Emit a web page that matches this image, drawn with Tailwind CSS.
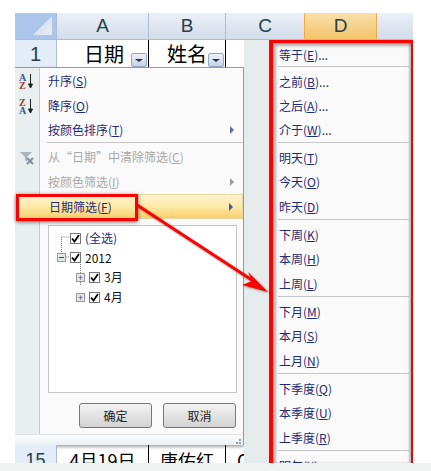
<!doctype html>
<html lang="zh">
  <head>
    <meta charset="UTF-8" />
    <title>日期筛选</title>
    <script src="https://cdn.jsdelivr.net/npm/@tailwindcss/browser@4"></script>
  </head>
  <body class="bg-white">
    <div class="relative w-[431px] h-[471px] overflow-hidden flex flex-col font-['Noto_Sans_CJK_SC',sans-serif]">
      <div class="h-[13px] shrink-0"></div>

      <!-- sheet -->
      <div class="ml-[15px] w-[398px] h-[450px] shrink-0 overflow-hidden flex flex-col">
        <!-- column headers -->
        <div class="flex h-[27px] shrink-0 text-[19px] text-[#24404f] font-['Liberation_Sans',sans-serif] border-b border-[#a9bdd6]">
          <div class="relative w-[42px] bg-[#abc6ea] border-r border-[#a9bdd6]">
            <div class="absolute right-[4px] bottom-[4px] w-[19px] h-[19px] bg-gradient-to-br from-[#c9d8ec] to-[#e8eef6] [clip-path:polygon(100%_0,100%_100%,0_100%)]"></div>
          </div>
          <div class="w-[92px] flex items-center justify-center bg-gradient-to-b from-[#eceff6] to-[#d3dcea] border-r border-[#a9bdd6]">A</div>
          <div class="w-[77px] flex items-center justify-center bg-gradient-to-b from-[#eceff6] to-[#d3dcea] border-r border-[#a9bdd6]">B</div>
          <div class="w-[78px] flex items-center justify-center bg-gradient-to-b from-[#eceff6] to-[#d3dcea]">C</div>
          <div class="w-[73px] flex items-center justify-center bg-gradient-to-b from-[#f9dfa8] to-[#f1c56a] border-x border-[#f0ab45]">D</div>
          <div class="flex-1 bg-gradient-to-b from-[#eceff6] to-[#d3dcea]"></div>
        </div>

        <div class="flex flex-1 min-h-0">
          <!-- left column: row 1, filter menu, row 15 -->
          <div class="w-[229px] shrink-0 flex flex-col">
            <div class="flex h-[27px] shrink-0">
              <div class="w-[42px] bg-[#e4ecf7] border-r border-[#a9bdd6] flex items-center justify-center text-[20px] text-[#24404f] font-['Liberation_Sans',sans-serif]">1</div>
              <div class="w-[92px] border-r border-black flex items-center justify-end text-[20px] text-black">
                <span class="mr-[7px]">日期</span>
                <span class="self-end mr-px w-[16px] h-[14px] rounded-[2px] border border-[#98a8c4] bg-gradient-to-b from-[#eef1f8] to-[#c9d3e6] flex items-center justify-center">
                  <span class="w-0 h-0 border-x-[4px] border-x-transparent border-t-[3px] border-t-[#1f2f5f]"></span>
                </span>
              </div>
              <div class="w-[77px] border-r border-black flex items-center justify-end text-[20px] text-black">
                <span class="mr-[1px]">姓名</span>
                <span class="self-end mr-px w-[16px] h-[14px] rounded-[2px] border border-[#98a8c4] bg-gradient-to-b from-[#eef1f8] to-[#c9d3e6] flex items-center justify-center">
                  <span class="w-0 h-0 border-x-[4px] border-x-transparent border-t-[3px] border-t-[#1f2f5f]"></span>
                </span>
              </div>
              <div class="flex-1"></div>
            </div>

            <!-- filter menu -->
            <div class="h-[378px] shrink-0 flex flex-col bg-[#fafafa] border-t border-r border-[#9a9a9a] shadow-[0_2px_3px_rgba(0,0,0,0.35)]">
              <div class="flex h-[366px]">
                <div class="w-[25px] shrink-0 bg-[#e9eeee] border-r border-[#c9c9c9] flex flex-col pt-px">
                  <div class="h-[25px] flex items-center pl-[4px] gap-[2px]">
                    <span class="flex flex-col text-[10px] leading-[8px] font-bold font-['Liberation_Serif',serif]"><span class="text-[#2f5a9e]">A</span><span class="text-[#9c3a35]">Z</span></span>
                    <svg class="w-[5px] h-[15px]" viewBox="0 0 5 15"><path d="M2.5 0v13M.5 10l2 4 2-4z" stroke="#222" fill="#222" stroke-width="1" /></svg>
                  </div>
                  <div class="h-[25px] flex items-center pl-[4px] gap-[2px]">
                    <span class="flex flex-col text-[10px] leading-[8px] font-bold font-['Liberation_Serif',serif]"><span class="text-[#9c3a35]">Z</span><span class="text-[#2f5a9e]">A</span></span>
                    <svg class="w-[5px] h-[15px]" viewBox="0 0 5 15"><path d="M2.5 0v13M.5 10l2 4 2-4z" stroke="#222" fill="#222" stroke-width="1" /></svg>
                  </div>
                  <div class="h-[27px]"></div>
                  <div class="h-[25px] flex items-center pl-[5px]">
                    <svg class="w-[15px] h-[13px]" viewBox="0 0 15 13">
                      <path d="M0 0h12L7 5v5L5 8V5z" fill="#a9b6bd" />
                      <path d="M7 6l6 6M13 6l-6 6" stroke="#7f8c94" stroke-width="1.8" />
                    </svg>
                  </div>
                </div>

                <div class="flex-1 min-w-0 flex flex-col text-[12px] text-[#1c2b78]">
                  <div class="h-[25px] flex items-center pl-[8px]"><span>升序(<u>S</u>)</span></div>
                  <div class="h-[25px] flex items-center pl-[8px]"><span>降序(<u>O</u>)</span></div>
                  <div class="h-[24px] flex items-center justify-between pl-[8px] pr-[9px]"><span>按颜色排序(<u>T</u>)</span><span class="w-0 h-0 border-y-[4px] border-y-transparent border-l-[4px] border-l-[#5a6ea5]"></span></div>
                  <div class="ml-[7px] h-px bg-[#c5c5c5]"></div>
                  <div class="h-[26px] pt-[2px] flex items-center pl-[8px] text-[#a8a8a8]"><span>从“日期”中清除筛选(<u>C</u>)</span></div>
                  <div class="h-[25px] flex items-center justify-between pl-[8px] pr-[9px] text-[#a8a8a8]"><span>按颜色筛选(<u>I</u>)</span><span class="w-0 h-0 border-y-[4px] border-y-transparent border-l-[4px] border-l-[#9a9a9a]"></span></div>
                  <div class="h-[25px] -ml-[24px] pl-[32px] pr-[9px] flex items-center justify-between bg-gradient-to-b from-[#fff3cf] via-[#fde9a8] to-[#fbcf68] border border-[#e6d59f]"><span>日期筛选(<u>F</u>)</span><span class="w-0 h-0 border-y-[4px] border-y-transparent border-l-[4px] border-l-[#3f5a9e]"></span></div>

                  <!-- date tree -->
                  <div class="relative ml-[8px] mr-[6px] mt-[6px] h-[168px] shrink-0 bg-white border border-[#c4c4c4] pt-[2px] text-[12px] text-black">
                    <svg class="absolute left-0 top-0 w-[60px] h-[90px]" viewBox="0 0 60 90" fill="none" stroke="#777" stroke-dasharray="1 1">
                      <path d="M12.5 11v17M12.5 11h9M17 31h5M31.5 36v24M31.5 50h5M31.5 70h5" />
                    </svg>
                    <div class="relative h-[20px] flex items-center pl-[21px] gap-[4px] text-[#1c2b78]">
                      <span class="w-[11px] h-[11px] border border-[#777] bg-white flex items-center justify-center">
                        <svg class="w-[9px] h-[9px]" viewBox="0 0 9 9"><path d="M1 4.5l2.5 3L8 1" fill="none" stroke="#000" stroke-width="1.8" /></svg>
                      </span>
                      <span>(全选)</span>
                    </div>
                    <div class="relative h-[19px] flex items-center pl-[8px] text-[#111]">
                      <span class="w-[9px] h-[9px] border border-[#999] bg-[#e3e6ea] flex items-center justify-center"><span class="w-[5px] h-px bg-[#444]"></span></span>
                      <span class="ml-[4px] w-[11px] h-[11px] border border-[#777] bg-white flex items-center justify-center">
                        <svg class="w-[9px] h-[9px]" viewBox="0 0 9 9"><path d="M1 4.5l2.5 3L8 1" fill="none" stroke="#000" stroke-width="1.8" /></svg>
                      </span>
                      <span class="ml-[4px]">2012</span>
                    </div>
                    <div class="relative h-[20px] flex items-center pl-[27px] text-[#111]">
                      <span class="w-[9px] h-[9px] border border-[#999] bg-[#e3e6ea] text-[#2d4a8a] text-[9px] leading-[7px] text-center">+</span>
                      <span class="ml-[4px] w-[11px] h-[11px] border border-[#777] bg-white flex items-center justify-center">
                        <svg class="w-[9px] h-[9px]" viewBox="0 0 9 9"><path d="M1 4.5l2.5 3L8 1" fill="none" stroke="#000" stroke-width="1.8" /></svg>
                      </span>
                      <span class="ml-[4px]">3月</span>
                    </div>
                    <div class="relative h-[20px] flex items-center pl-[27px] text-[#111]">
                      <span class="w-[9px] h-[9px] border border-[#999] bg-[#e3e6ea] text-[#2d4a8a] text-[9px] leading-[7px] text-center">+</span>
                      <span class="ml-[4px] w-[11px] h-[11px] border border-[#777] bg-white flex items-center justify-center">
                        <svg class="w-[9px] h-[9px]" viewBox="0 0 9 9"><path d="M1 4.5l2.5 3L8 1" fill="none" stroke="#000" stroke-width="1.8" /></svg>
                      </span>
                      <span class="ml-[4px]">4月</span>
                    </div>
                  </div>

                  <div class="mt-[10px] flex justify-end gap-[11px] pr-[7px]">
                    <button class="w-[73px] h-[25px] rounded-[3px] border border-[#777] bg-gradient-to-b from-[#f3f3f3] to-[#d2d2d2] text-[12px] text-[#222]">确定</button>
                    <button class="w-[73px] h-[25px] rounded-[3px] border border-[#777] bg-gradient-to-b from-[#f3f3f3] to-[#d2d2d2] text-[12px] text-[#222]">取消</button>
                  </div>
                </div>
              </div>
              <div class="flex-1 bg-gradient-to-b from-white to-[#e8eef3] border-t border-[#dfe3e6] flex items-end justify-end pr-[2px] pb-[1px]">
                <div class="grid grid-cols-2 gap-px">
                  <span></span><span class="w-[2px] h-[2px] bg-[#8ea4bd]"></span>
                  <span class="w-[2px] h-[2px] bg-[#8ea4bd]"></span><span class="w-[2px] h-[2px] bg-[#8ea4bd]"></span>
                </div>
              </div>
            </div>

            <!-- row 15 -->
            <div class="flex h-[18px] shrink-0 overflow-hidden text-[18px] leading-[18px] text-black">
              <div class="w-[42px] bg-[#e4ecf7] border-r border-[#a9bdd6] pt-[6px] text-center text-[#24404f] font-['Liberation_Sans',sans-serif]">15</div>
              <div class="w-[92px] border-r border-black pt-[6px] text-center">4月19日</div>
              <div class="w-[77px] border-r border-black pt-[6px] text-center">唐佑红</div>
              <div class="flex-1 pt-[6px] pl-[11px] overflow-hidden">C</div>
            </div>
          </div>

          <!-- gap -->
          <div class="w-[25px] shrink-0 bg-[#e6ecec]"></div>

          <!-- date submenu -->
          <div class="flex-1 min-w-0 flex flex-col bg-[#fafafa] border-l-[4px] border-t-[3px] border-r-[2px] border-[#ff0000] text-[12px] text-[#1c2b78] shadow-[inset_3px_3px_3px_rgba(0,0,0,0.3),inset_-2px_0_2px_rgba(0,0,0,0.25)]">
            <div class="h-[23px] shrink-0 flex items-center pl-[6px]"><span>等于(<u>E</u>)...</span></div>
            <div class="ml-[5px] h-px shrink-0 bg-[#c5c5c5]"></div>
            <div class="h-[26px] shrink-0 pt-[3px] flex items-center pl-[6px]"><span>之前(<u>B</u>)...</span></div>
            <div class="h-[25px] shrink-0 flex items-center pl-[6px]"><span>之后(<u>A</u>)...</span></div>
            <div class="h-[24px] shrink-0 flex items-center pl-[6px]"><span>介于(<u>W</u>)...</span></div>
            <div class="ml-[5px] h-px shrink-0 bg-[#c5c5c5]"></div>
            <div class="h-[26px] shrink-0 pt-[3px] flex items-center pl-[6px]"><span>明天(<u>T</u>)</span></div>
            <div class="h-[25px] shrink-0 flex items-center pl-[6px]"><span>今天(<u>O</u>)</span></div>
            <div class="h-[25px] shrink-0 flex items-center pl-[6px]"><span>昨天(<u>D</u>)</span></div>
            <div class="ml-[5px] h-px shrink-0 bg-[#c5c5c5]"></div>
            <div class="h-[26px] shrink-0 pt-[3px] flex items-center pl-[6px]"><span>下周(<u>K</u>)</span></div>
            <div class="h-[25px] shrink-0 flex items-center pl-[6px]"><span>本周(<u>H</u>)</span></div>
            <div class="h-[25px] shrink-0 flex items-center pl-[6px]"><span>上周(<u>L</u>)</span></div>
            <div class="ml-[5px] h-px shrink-0 bg-[#c5c5c5]"></div>
            <div class="h-[26px] shrink-0 pt-[3px] flex items-center pl-[6px]"><span>下月(<u>M</u>)</span></div>
            <div class="h-[25px] shrink-0 flex items-center pl-[6px]"><span>本月(<u>S</u>)</span></div>
            <div class="h-[25px] shrink-0 flex items-center pl-[6px]"><span>上月(<u>N</u>)</span></div>
            <div class="ml-[5px] h-px shrink-0 bg-[#c5c5c5]"></div>
            <div class="h-[26px] shrink-0 pt-[3px] flex items-center pl-[6px]"><span>下季度(<u>Q</u>)</span></div>
            <div class="h-[25px] shrink-0 flex items-center pl-[6px]"><span>本季度(<u>U</u>)</span></div>
            <div class="h-[25px] shrink-0 flex items-center pl-[6px]"><span>上季度(<u>R</u>)</span></div>
            <div class="ml-[5px] h-px shrink-0 bg-[#c5c5c5]"></div>
            <div class="h-[26px] shrink-0 pt-[3px] flex items-center pl-[6px]"><span>明年(<u>X</u>)</span></div>
          </div>
        </div>
      </div>

      <div class="flex-1 bg-[#f0f3f2]"></div>

      <!-- red annotations over the screenshot -->
      <div class="absolute left-[16px] top-[194px] w-[122px] h-[27px] border-[3px] border-[#ff0000] shadow-[0_1px_4px_rgba(0,0,0,0.6)]"></div>
      <svg class="absolute left-0 top-0 w-[431px] h-[471px] pointer-events-none drop-shadow-[1px_1px_1px_rgba(0,0,0,0.4)]" viewBox="0 0 431 471">
        <path d="M137 205L258 284" stroke="#ff0000" stroke-width="3" fill="none" />
        <path d="M268 292L242 285 252 281 248 272z" fill="#ff0000" />
      </svg>
    </div>
  </body>
</html>
